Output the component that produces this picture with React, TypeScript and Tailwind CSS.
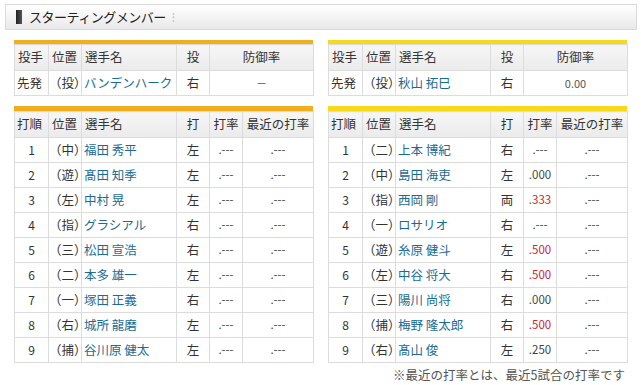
import React from "react";

const F = { fontFamily: '"Noto Sans CJK JP", "Noto Sans", sans-serif' };

type Pit = { role: string; pos: string; name: string; hand: string; era: string };
type Bat = { no: string; pos: string; name: string; hand: string; avg: string; recent: string; red?: boolean };

const left: Bat[] = [
  { no: "1", pos: "（中）", name: "福田 秀平", hand: "左", avg: ".---", recent: ".---" },
  { no: "2", pos: "（遊）", name: "髙田 知季", hand: "左", avg: ".---", recent: ".---" },
  { no: "3", pos: "（左）", name: "中村 晃", hand: "左", avg: ".---", recent: ".---" },
  { no: "4", pos: "（指）", name: "グラシアル", hand: "右", avg: ".---", recent: ".---" },
  { no: "5", pos: "（三）", name: "松田 宣浩", hand: "右", avg: ".---", recent: ".---" },
  { no: "6", pos: "（二）", name: "本多 雄一", hand: "左", avg: ".---", recent: ".---" },
  { no: "7", pos: "（一）", name: "塚田 正義", hand: "右", avg: ".---", recent: ".---" },
  { no: "8", pos: "（右）", name: "城所 龍磨", hand: "左", avg: ".---", recent: ".---" },
  { no: "9", pos: "（捕）", name: "谷川原 健太", hand: "左", avg: ".---", recent: ".---" },
];
const right: Bat[] = [
  { no: "1", pos: "（二）", name: "上本 博紀", hand: "右", avg: ".---", recent: ".---" },
  { no: "2", pos: "（中）", name: "島田 海吏", hand: "左", avg: ".000", recent: ".---" },
  { no: "3", pos: "（指）", name: "西岡 剛", hand: "両", avg: ".333", recent: ".---", red: true },
  { no: "4", pos: "（一）", name: "ロサリオ", hand: "右", avg: ".---", recent: ".---" },
  { no: "5", pos: "（遊）", name: "糸原 健斗", hand: "左", avg: ".500", recent: ".---", red: true },
  { no: "6", pos: "（左）", name: "中谷 将大", hand: "右", avg: ".500", recent: ".---", red: true },
  { no: "7", pos: "（三）", name: "陽川 尚将", hand: "右", avg: ".000", recent: ".---" },
  { no: "8", pos: "（捕）", name: "梅野 隆太郎", hand: "右", avg: ".500", recent: ".---", red: true },
  { no: "9", pos: "（右）", name: "髙山 俊", hand: "左", avg: ".250", recent: ".---" },
];

const th = "border border-[#dcdcdc] bg-gradient-to-b from-[#f6f6f6] to-[#ebebeb] font-normal h-[26px] p-0";
const td = "border border-[#dcdcdc] bg-white h-[25px] p-0";
const paren = "[text-spacing-trim:space-all] whitespace-nowrap";

function PitchTable({ bar, p }: { bar: string; p: Pit }) {
  return (
    <div className="w-[299px]">
      <div className={`h-[4px] ${bar}`} />
      <table className="w-[299px] table-fixed border-collapse text-[12.5px] text-[#333]">
        <colgroup>
          <col className="w-[34px]" />
          <col className="w-[33px]" />
          <col className="w-[95px]" />
          <col className="w-[33px]" />
          <col className="w-[104px]" />
        </colgroup>
        <thead>
          <tr>
            <th className={`${th} text-left pl-[3px]`}>投手</th>
            <th className={`${th} text-left pl-[3px]`}>位置</th>
            <th className={`${th} text-left pl-[3px]`}>選手名</th>
            <th className={`${th} text-center`}>投</th>
            <th className={`${th} text-center`}>防御率</th>
          </tr>
        </thead>
        <tbody>
          <tr>
            <td className={`${td} pl-[2px]`}>{p.role}</td>
            <td className={`${td} ${paren}`}>{p.pos}</td>
            <td className={`${td} pl-[2px] text-[#1b6b93]`}>{p.name}</td>
            <td className={`${td} text-center`}>{p.hand}</td>
            <td className={`${td} text-center text-[11px] text-[#555]`}>{p.era}</td>
          </tr>
        </tbody>
      </table>
    </div>
  );
}

function BatTable({ bar, rows }: { bar: string; rows: Bat[] }) {
  return (
    <div className="w-[299px]">
      <div className={`h-[5px] ${bar}`} />
      <table className="w-[299px] table-fixed border-collapse text-[12.5px] text-[#333]">
        <colgroup>
          <col className="w-[34px]" />
          <col className="w-[33px]" />
          <col className="w-[95px]" />
          <col className="w-[33px]" />
          <col className="w-[33px]" />
          <col className="w-[71px]" />
        </colgroup>
        <thead>
          <tr>
            <th className={`${th} text-left pl-[2px]`}>打順</th>
            <th className={`${th} text-left pl-[3px]`}>位置</th>
            <th className={`${th} text-left pl-[3px]`}>選手名</th>
            <th className={`${th} text-center`}>打</th>
            <th className={`${th} text-center`}>打率</th>
            <th className={`${th} text-center`}>最近の打率</th>
          </tr>
        </thead>
        <tbody>
          {rows.map((r) => (
            <tr key={r.no}>
              <td className={`${td} text-center text-[12px]`}>{r.no}</td>
              <td className={`${td} ${paren}`}>{r.pos}</td>
              <td className={`${td} pl-[2px] text-[#1b6b93]`}>{r.name}</td>
              <td className={`${td} text-center`}>{r.hand}</td>
              <td className={`${td} text-center text-[11.5px] ${r.red ? "text-[#cc2233]" : "text-[#444]"}`}>{r.avg}</td>
              <td className={`${td} text-center text-[11.5px] text-[#444]`}>{r.recent}</td>
            </tr>
          ))}
        </tbody>
      </table>
    </div>
  );
}

export default function App() {
  return (
    <div className="w-[641px] h-[385px] bg-white overflow-hidden" style={F}>
      <div className="pt-[4px] pl-[5px]">
        <div className="w-[632px] h-[26px] border border-[#dadada] bg-gradient-to-b from-white to-[#e9e9e9] flex items-center">
          <div className="ml-[10px] w-[6px] h-[14px] bg-gradient-to-r from-[#222] to-[#555]" />
          <div className="ml-[7px] text-[13px] text-[#222] tracking-[-0.5px]">スターティングメンバー</div>
          <div className="ml-[6px] text-[12px] text-[#bbb] leading-none">⁝</div>
        </div>
      </div>
      <div className="flex gap-[15px] pl-[14px] mt-[10px]">
        <PitchTable bar="bg-[#f1ae1c]" p={{ role: "先発", pos: "（投）", name: "バンデンハーク", hand: "右", era: "－" }} />
        <PitchTable bar="bg-[#f7d91c]" p={{ role: "先発", pos: "（投）", name: "秋山 拓巳", hand: "右", era: "0.00" }} />
      </div>
      <div className="flex gap-[15px] pl-[14px] mt-[10px]">
        <BatTable bar="bg-[#f1ae1c]" rows={left} />
        <BatTable bar="bg-[#f7d91c]" rows={right} />
      </div>
      <div className="w-[625px] text-right text-[12.5px] text-[#555] mt-[3px]">※最近の打率とは、最近5試合の打率です</div>
    </div>
  );
}
